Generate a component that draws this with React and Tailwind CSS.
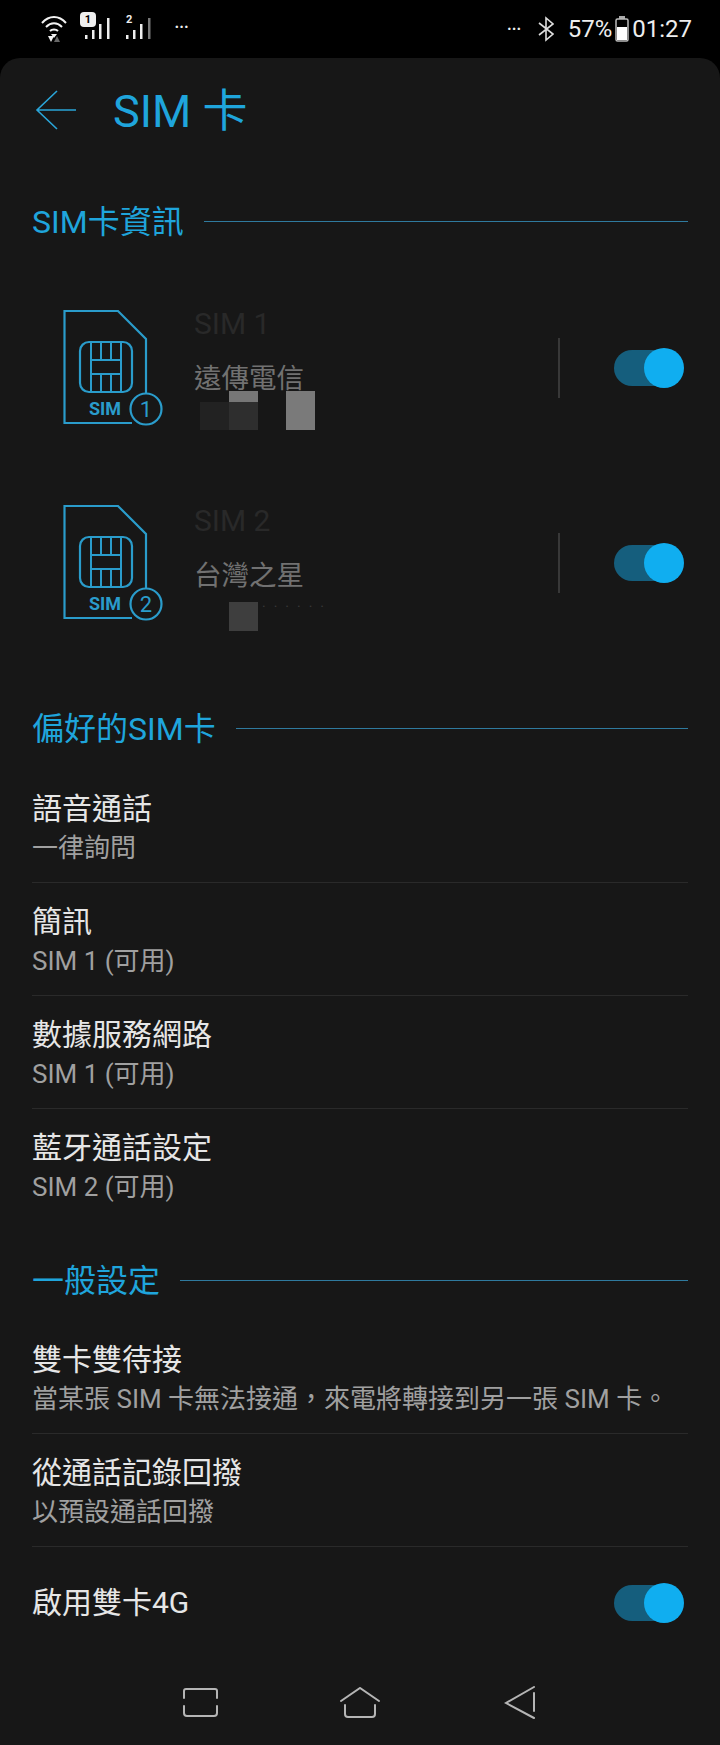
const FONT = { fontFamily: 'Roboto, "Noto Sans CJK TC", sans-serif' }

const Toggle = () => (
    <div className="relative w-[68px] h-9 rounded-full bg-[#155e7d]">
        <div className="absolute right-[-2px] top-[-2px] w-10 h-10 rounded-full bg-[#10aef0]" />
    </div>
)

const SimIcon = ({ num }) => (
    <svg width="108" height="126" viewBox="0 0 108 126" fill="none" stroke="#2a9ccb" strokeWidth="2.2" className="shrink-0">
        <path d="M72 118H4.5V6H58L86 34V88" />
        <circle cx="86" cy="104" r="15.5" />
        <rect x="20" y="37" width="52" height="50" rx="9" />
        <path d="M31 37V87M61 37V87M41 37V55M51 37V55M41 69V87M51 69V87M31 55H61M31 69H61" strokeWidth="2" />
        <text x="45" y="110" fontSize="18" fontWeight="700" fill="#2a9ccb" stroke="none" textAnchor="middle">SIM</text>
        <text x="86" y="112" fontSize="22" fill="#2a9ccb" stroke="none" textAnchor="middle">{num}</text>
    </svg>
)

const SectionTitle = ({ title }) => (
    <div className="flex items-center gap-5 h-10">
        <span className="text-[32px] leading-10 text-[#1fa5dc]">{title}</span>
        <div className="flex-1 h-px mb-[2px] bg-[#2f7a9e]" />
    </div>
)

const Row = ({ label, sub, last }) => (
    <div className={`h-[113px] pt-[19px] ${last ? '' : 'border-b border-[#2a2a2a]'}`}>
        <div className="text-[30px] leading-10 text-[#e6e6e6]">{label}</div>
        <div className="text-[26px] leading-10 mt-[-1px] text-[#a0a0a0]">{sub}</div>
    </div>
)

const SimRow = ({ num, carrier, titleClass, children }) => (
    <div className="flex h-[195px] pt-[35px] pl-7">
        <SimIcon num={num} />
        <div className="w-[390px] pl-[26px]">
            <div className={`text-[30px] leading-10 text-[#292929] ${titleClass}`}>SIM {num}</div>
            <div className="text-[27.5px] leading-10 h-10 mt-[15px] text-[#717171]">{carrier}</div>
            {children}
        </div>
        <div className="flex items-center h-[116px] mt-[5px]">
            <div className="w-0.5 h-[60px] bg-[#383838] mr-[54px]" />
            <Toggle />
        </div>
    </div>
)

const Dots = () => <span className="text-[22px] leading-none tracking-[-1px] text-[#eee]">···</span>

export default function App() {
    return (
        <div className="w-[720px] h-[1745px] bg-black overflow-hidden" style={FONT}>
            {/* Status bar */}
            <div className="flex items-center justify-between h-[58px] pl-[40px] pr-[28px]">
                <div className="flex items-center">
                    <svg width="28" height="30" viewBox="0 0 28 30" fill="none" stroke="#f2f2f2" strokeWidth="2">
                        <path d="M2 9C9 1 19 1 26 9M6 13C11 8 17 8 22 13M10 17C12 15 16 15 18 17" />
                        <path d="M11 20L14 24L17 20Z" fill="#f2f2f2" stroke="none" />
                        <path d="M8 22H14L11 28Z" fill="#f2f2f2" stroke="none" />
                        <path d="M17 22L14 28H20Z" fill="#666" stroke="none" />
                    </svg>
                    <div className="relative w-8 h-[30px] ml-[11px]">
                        <div className="absolute left-[1px] top-[-2px] w-4 h-[15px] rounded-[4px] bg-[#eee] text-[11px] leading-[15px] font-bold text-center text-black">1</div>
                        <svg width="32" height="30" viewBox="0 0 32 30" fill="#eee" className="absolute left-0 top-0">
                            <rect x="6" y="21" width="2.5" height="4" /><rect x="13" y="16" width="2.5" height="9" /><rect x="20" y="10" width="2.5" height="15" /><rect x="28" y="4" width="2.5" height="21" />
                        </svg>
                    </div>
                    <div className="relative w-8 h-[30px] ml-[9px]">
                        <div className="absolute left-[6px] top-0 text-[11px] leading-[12px] font-bold text-[#eee]">2</div>
                        <svg width="32" height="30" viewBox="0 0 32 30" fill="#eee" className="absolute left-0 top-0">
                            <rect x="6" y="21" width="2.5" height="4" /><rect x="13" y="16" width="2.5" height="9" /><rect x="20" y="10" width="2.5" height="15" /><rect x="28" y="4" width="2.5" height="21" fill="#777" />
                        </svg>
                    </div>
                    <span className="ml-[22px]"><Dots /></span>
                </div>
                <div className="flex items-center text-[24px] text-[#eee]">
                    <span className="mr-[17px]"><Dots /></span>
                    <svg width="16" height="26" viewBox="0 0 16 26" fill="none" stroke="#ddd" strokeWidth="1.6" className="mr-[14px]">
                        <path d="M1 7L15 18L8 24V2L15 8L1 19" />
                    </svg>
                    <span>57%</span>
                    <svg width="16" height="26" viewBox="0 0 16 26" className="mx-[2px]">
                        <rect x="5" y="0" width="6" height="3" fill="#aaa" />
                        <rect x="2" y="3" width="12" height="22" rx="1.5" fill="none" stroke="#bbb" strokeWidth="1.5" />
                        <rect x="3" y="11" width="10" height="13" fill="#fff" />
                    </svg>
                    <span>01:27</span>
                </div>
            </div>

            {/* Panel */}
            <div className="h-[1687px] rounded-t-[20px] bg-[#171717] px-8">
                <div className="flex items-center h-[104px] text-[#1fa5dc]">
                    <svg width="42" height="40" viewBox="0 0 42 40" fill="none" stroke="#2aa5d8" strokeWidth="1.6" className="ml-[3px] shrink-0">
                        <path d="M41 20H2M22 1L2 20L22 39" />
                    </svg>
                    <span className="ml-[36px] mt-[3px] text-[45px]">SIM 卡</span>
                </div>

                <div className="mt-10">
                    <SectionTitle title="SIM卡資訊" />
                </div>
                <div className="mt-7 mb-[49px]">
                    <SimRow num={1} carrier="遠傳電信" titleClass="mt-[-1px]">
                        <div className="relative h-10 mt-[-8px]">
                            <div className="absolute left-[6px] top-[11px] w-[29px] h-7 bg-[#222]" />
                            <div className="absolute left-[35px] top-0 w-[29px] h-[11px] bg-[#777]" />
                            <div className="absolute left-[35px] top-[11px] w-[29px] h-7 bg-[#2e2e2e]" />
                            <div className="absolute left-[92px] top-0 w-[29px] h-[39px] bg-[#7a7a7a]" />
                        </div>
                    </SimRow>
                    <SimRow num={2} carrier="台灣之星" titleClass="mt-[1px]">
                        <div className="relative h-10 mt-[-2px]">
                            <div className="absolute left-[35px] top-[8px] w-[29px] h-[29px] bg-[#3e3e3e]" />
                            <div className="absolute left-[68px] top-[6px] text-[14px] leading-none tracking-[8px] text-[#3a3a3a]">······</div>
                        </div>
                    </SimRow>
                </div>

                <SectionTitle title="偏好的SIM卡" />
                <div className="mt-[21px] mb-[39px]">
                    <Row label="語音通話" sub="一律詢問" />
                    <Row label="簡訊" sub="SIM 1 (可用)" />
                    <Row label="數據服務網路" sub="SIM 1 (可用)" />
                    <Row label="藍牙通話設定" sub="SIM 2 (可用)" last />
                </div>

                <SectionTitle title="一般設定" />
                <div className="mt-5">
                    <Row label="雙卡雙待接" sub="當某張 SIM 卡無法接通，來電將轉接到另一張 SIM 卡。" />
                    <Row label="從通話記錄回撥" sub="以預設通話回撥" />
                    <div className="flex items-center justify-between h-[111px] pr-[6px]">
                        <span className="text-[30px] text-[#e6e6e6]">啟用雙卡4G</span>
                        <Toggle />
                    </div>
                </div>

                {/* Nav bar */}
                <div className="flex items-start mt-7 ml-[150px]">
                    <svg width="36" height="30" viewBox="0 0 36 30" fill="none" stroke="#b5b5b5" strokeWidth="2" strokeLinecap="round" className="mt-[2px]">
                        <path d="M2 10V3Q2 1 4 1H33Q35 1 35 3V10M2 18V25Q2 28 5 28H32Q35 28 35 25V18" />
                    </svg>
                    <svg width="40" height="32" viewBox="0 0 40 32" fill="none" stroke="#b5b5b5" strokeWidth="2" strokeLinecap="round" className="ml-[122px] mt-[1px]">
                        <path d="M1 14L20 1L39 14M5 18V27Q5 30 8 30H32Q35 30 35 27V18" />
                    </svg>
                    <svg width="32" height="34" viewBox="0 0 32 34" fill="none" stroke="#b5b5b5" strokeWidth="2" strokeLinecap="round" className="ml-[124px]">
                        <path d="M30 1L2 17L30 32M30 7V25" />
                    </svg>
                </div>
            </div>
        </div>
    )
}
